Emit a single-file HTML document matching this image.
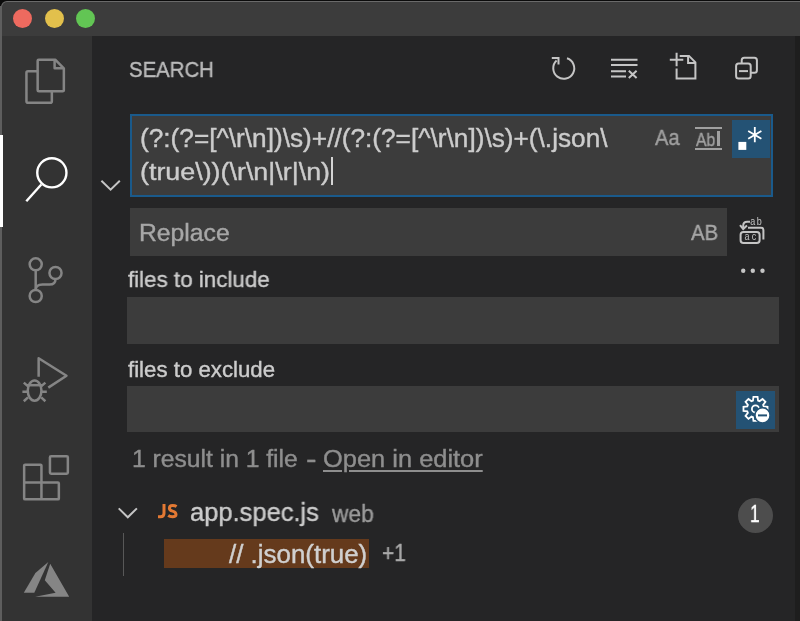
<!DOCTYPE html>
<html><head><meta charset="utf-8">
<style>
*{box-sizing:border-box;margin:0;padding:0}
html,body{width:800px;height:621px;overflow:hidden;background:#0b0b0b}
body{position:relative;font-family:"Liberation Sans",sans-serif}
.a{position:absolute}
.t{position:absolute;white-space:pre;transform-origin:0 0;will-change:transform;-webkit-text-stroke:0.4px currentColor}
.ov{position:absolute;left:0;top:0;will-change:transform}
</style></head><body>
<div class="a" style="left:1px;top:1px;width:805px;height:630px;border-radius:6px 0 0 0;background:#6a6a6a"></div>
<div class="a" style="left:0;top:6px;width:2px;height:615px;background:#5e5e5e"></div>
<div class="a" style="left:2px;top:2.4px;width:805px;height:33.6px;background:#3c3c3c;border-radius:5px 0 0 0"></div>
<div class="a" style="left:2px;top:36px;width:90px;height:600px;background:#333333"></div>
<div class="a" style="left:92px;top:36px;width:703px;height:600px;background:#252526"></div>
<div class="a" style="left:795px;top:36px;width:20px;height:600px;background:#1e1e1e"></div>
<div class="a" style="left:12.5px;top:8.5px;width:19px;height:19px;border-radius:50%;background:#ee6a5f"></div>
<div class="a" style="left:44.7px;top:8.5px;width:19px;height:19px;border-radius:50%;background:#e2c04c"></div>
<div class="a" style="left:76.3px;top:8.5px;width:19px;height:19px;border-radius:50%;background:#62c554"></div>
<div class="a" style="left:0;top:134.5px;width:3px;height:92.4px;background:#ffffff"></div>

<div class="a" style="left:130px;top:114px;width:643px;height:83px;background:#3c3c3c;border:2px solid #1a5a8b"></div>
<div class="a" style="left:731.8px;top:120.3px;width:38.2px;height:38px;background:#245274"></div>
<div class="a" style="left:331px;top:157px;width:1.6px;height:28px;background:#d4d4d4"></div>
<div class="a" style="left:130px;top:207.7px;width:597px;height:48px;background:#3c3c3c"></div>
<div class="a" style="left:127px;top:297.3px;width:652.3px;height:47.2px;background:#3c3c3c"></div>
<div class="a" style="left:127px;top:386px;width:652.3px;height:46px;background:#3c3c3c"></div>
<div class="a" style="left:736.4px;top:390.9px;width:38.2px;height:38px;background:#245274"></div>
<div class="a" style="left:123px;top:533px;width:1.3px;height:42.5px;background:#585858"></div>
<div class="a" style="left:164px;top:539px;width:205.2px;height:29px;background:#653a1c"></div>
<div class="a" style="left:738px;top:497.5px;width:35px;height:35px;border-radius:50%;background:#4d4d4d"></div>
<div class="a" style="left:694.8px;top:127px;width:26.8px;height:2px;background:#a0a0a0"></div>
<div class="a" style="left:694.8px;top:147.8px;width:26.8px;height:2px;background:#a0a0a0"></div>
<div class="a" style="left:717.4px;top:131px;width:2.2px;height:14.6px;background:#a0a0a0"></div>
<div class="t" style="left:129.31px;top:57.10px;font-size:22.00px;line-height:26.40px;color:#bbbbbb;transform:scaleX(0.9255);">SEARCH</div>
<div class="t" style="left:140.48px;top:123.35px;font-size:25.24px;line-height:30.29px;color:#cccccc;transform:scaleX(1.0390);">(?:(?=[^\r\n])\s)+//(?:(?=[^\r\n])\s)+(\.json\</div>
<div class="t" style="left:140.42px;top:157.25px;font-size:24.70px;line-height:29.64px;color:#cccccc;transform:scaleX(1.0878);">(true\))(\r\n|\r|\n)</div>
<div class="t" style="left:138.53px;top:218.31px;font-size:24.38px;line-height:29.26px;color:#a7a7a7;transform:scaleX(1.0137);">Replace</div>
<div class="t" style="left:691.20px;top:220.06px;font-size:22.16px;line-height:26.59px;color:#a7a7a7;transform:scaleX(0.9182);">AB</div>
<div class="t" style="left:654.70px;top:124.74px;font-size:21.65px;line-height:25.98px;color:#a0a0a0;transform:scaleX(0.9295);">Aa</div>
<div class="t" style="left:695.50px;top:129.55px;font-size:17.72px;line-height:21.26px;color:#a0a0a0;transform:scaleX(0.8873);">Ab</div>
<div class="t" style="left:128.30px;top:266.35px;font-size:22.68px;line-height:27.22px;color:#cccccc;transform:scaleX(0.9865);">files to include</div>
<div class="t" style="left:128.00px;top:357.10px;font-size:21.84px;line-height:26.21px;color:#cccccc;transform:scaleX(1.0186);">files to exclude</div>
<div class="t" style="left:132.27px;top:445.07px;font-size:23.71px;line-height:28.45px;color:#8e8e8e;transform:scaleX(1.0396);">1 result in 1 file</div>
<div class="t" style="left:305.51px;top:441.50px;font-size:28.16px;line-height:33.79px;color:#8e8e8e;transform:scaleX(1.1234);">-</div>
<div class="t" style="left:322.90px;top:444.23px;font-size:24.43px;line-height:29.32px;color:#8e8e8e;transform:scaleX(1.0412);"><span style="text-decoration:underline;text-underline-offset:3px">Open in editor</span></div>
<div class="t" style="left:190.44px;top:497.06px;font-size:25.64px;line-height:30.77px;color:#cccccc;transform:scaleX(0.9947);">app.spec.js</div>
<div class="t" style="left:331.60px;top:499.99px;font-size:23.58px;line-height:28.30px;color:#9a9a9a;transform:scaleX(0.9635);">web</div>
<div class="t" style="left:229.00px;top:538.77px;font-size:25.09px;line-height:30.11px;color:#d0d0d0;transform:scaleX(1.0333);">// .json(true)</div>
<div class="t" style="left:382.13px;top:540.31px;font-size:23.01px;line-height:27.61px;color:#aaaaaa;transform:scaleX(0.9053);">+1</div>
<div class="t" style="left:749.94px;top:501.23px;font-size:23.17px;line-height:27.80px;color:#ffffff;transform:scaleX(0.7384);">1</div>
<svg class="ov" width="800" height="621" viewBox="0 0 800 621">
<g fill="none" stroke="#858585" stroke-width="2.5" stroke-linejoin="round" stroke-linecap="butt">
 <path d="M37.65 60.8 Q37.65 59.65 38.8 59.65 L55.2 59.65 L63.85 68.3 L63.85 90.2 Q63.85 91.35 62.7 91.35 L38.8 91.35 Q37.65 91.35 37.65 90.2 Z"/>
 <path d="M54.6 59.65 L54.6 68.3 L63.85 68.3"/>
 <path d="M37.65 71.15 L28 71.15 Q26.45 71.15 26.45 72.7 L26.45 101.3 Q26.45 102.85 28 102.85 L50.3 102.85 Q51.85 102.85 51.85 101.3 L51.85 91.35"/>
 <circle cx="35.7" cy="264.3" r="6.05"/>
 <circle cx="35.7" cy="296" r="6.05"/>
 <circle cx="55.5" cy="273" r="6.05"/>
 <path d="M35.7 270.35 L35.7 289.95"/>
 <path d="M55.5 279.05 C55.5 283 53 284.6 49.5 284.6 L42.5 284.6 C38.5 284.6 35.7 286.5 35.7 290"/>
 <path d="M38.65 376.7 L38.65 358.2 L66.5 375.7 L48.3 387.6"/>
 <ellipse cx="34.6" cy="390.6" rx="6.85" ry="10.1"/>
 <path d="M27 385.2 L42.2 385.2"/>
 <path d="M23.8 382.6 L28.4 386.6 M45.4 382.6 L40.8 386.6 M22.4 391.7 L27.4 391.7 M41.8 391.7 L46.8 391.7 M23.8 401.2 L28 397.4 M45.4 401.2 L41.2 397.4"/>
 <path d="M24.15 465.6 Q24.15 464.65 25.1 464.65 L40.5 464.65 Q41.45 464.65 41.45 465.6 L41.45 482.55 L57.9 482.55 Q58.85 482.55 58.85 483.5 L58.85 498.4 Q58.85 499.35 57.9 499.35 L25.1 499.35 Q24.15 499.35 24.15 498.4 Z"/>
 <path d="M24.15 482.55 L41.45 482.55 L41.45 499.35"/>
 <rect x="49.95" y="456.15" width="17.9" height="17.5" rx="1.2"/>
</g>
<g fill="#858585">
 <polygon points="48.3,562.1 35.4,572.9 23.8,592.7 34.3,592.7"/>
 <polygon points="50.2,563.7 69.2,596.7 35.1,596.7 55.6,592.7 44.8,580.3"/>
</g>
<g fill="none" stroke="#ffffff" stroke-width="2.4">
 <circle cx="51.85" cy="172.8" r="14.6"/>
 <path d="M41.3 184.5 L26.3 201.3"/>
</g>
<g fill="none" stroke="#c5c5c5" stroke-width="2" stroke-linejoin="miter">
 <path d="M567 58.3 A10.5 10.5 0 1 1 556.6 60.6"/>
 <path d="M551.8 57.9 L558.5 57.9 L558.5 64.5"/>
 <path d="M611 59.7 L637.5 59.7 M611 65.1 L637.5 65.1 M611 71.2 L626 71.2 M611 76.6 L626 76.6"/>
 <path d="M628.8 70.8 L636.6 78 M636.6 70.8 L628.8 78"/>
 <path d="M669.8 59.7 L683.3 59.7 M676.6 52.8 L676.6 66.3"/>
 <path d="M676.6 68.6 L676.6 78.4 L695.4 78.4 L695.4 62.3 L689 55.9 L679.7 55.9"/>
 <path d="M688.1 55.9 L688.1 62.9 L695.4 62.9"/>
 <rect x="736.1" y="63.4" width="14.6" height="15.2" rx="2.5"/>
 <path d="M741.7 63.4 L741.7 60.3 Q741.7 57.8 744.2 57.8 L754.4 57.8 Q756.9 57.8 756.9 60.3 L756.9 70.2 Q756.9 72.7 754.4 72.7 L750.7 72.7"/>
 <path d="M739 71.1 L748 71.1"/>
 <path d="M101.4 180.7 L110.6 189.6 L119.8 180.7"/>
 <path d="M118.7 508.4 L127.8 517.3 L136.9 508.4"/>
 <rect x="740.6" y="232" width="19" height="11" rx="2.8"/>
 <path d="M748 227.7 L761 227.7 Q763.4 227.7 763.4 230.1 L763.4 239.5"/>
 <path d="M750 221.7 L747.2 221.7 Q743.2 221.7 743.2 225.7 L743.2 229"/>
 <path d="M740 225.2 L743.2 229 L747 225.5"/>
</g>
<g fill="none" stroke="#e37933" stroke-width="3" stroke-linecap="butt">
 <path d="M164 504 L164 513.2 Q164 516.7 160.5 516.7 L158 516.7"/>
 <path d="M176.6 506.4 Q175 505.4 172.6 505.4 Q169.4 505.4 169.4 508.2 Q169.4 510.3 172.6 511.1 Q176 512 176 514.5 Q176 516.8 172.4 516.8 Q169.9 516.8 168.2 515.6"/>
</g>
<g fill="#c5c5c5" font-family="Liberation Sans" font-size="10">
 <text x="750.2" y="224.7" letter-spacing="1.6" transform="translate(750.2 0) scale(0.9 1) translate(-750.2 0)">ab</text>
 <text x="744.6" y="240" letter-spacing="2.4" transform="translate(744.6 0) scale(0.9 1) translate(-744.6 0)">ac</text>
 <circle cx="743.2" cy="270.7" r="2.2"/><circle cx="752.8" cy="270.7" r="2.2"/><circle cx="762.5" cy="270.7" r="2.2"/>
</g>
<g fill="#ffffff" stroke="none">
 <rect x="738.4" y="141.9" width="7.9" height="8"/>
</g>
<g stroke="#ffffff" stroke-width="1.8" fill="none">
 <path d="M754.8 126.9 L754.8 142.3 M748.2 131 L761.4 138.7 M748.2 138.7 L761.4 131"/>
</g>
<g fill="none" stroke="#ffffff" stroke-width="1.8">
 <path d="M752.96 400.68 L753.44 396.88 L757.56 396.88 L758.04 400.68 L759.51 401.29 L762.54 398.94 L765.46 401.86 L763.11 404.89 L763.72 406.36 L767.52 406.84 L767.52 410.96 L763.72 411.44 L763.11 412.91 L765.46 415.94 L762.54 418.86 L759.51 416.51 L758.04 417.12 L757.56 420.92 L753.44 420.92 L752.96 417.12 L751.49 416.51 L748.46 418.86 L745.54 415.94 L747.89 412.91 L747.28 411.44 L743.48 410.96 L743.48 406.84 L747.28 406.36 L747.89 404.89 L745.54 401.86 L748.46 398.94 L751.49 401.29Z"/>
 <circle cx="755.5" cy="408.9" r="3.6"/>
</g>
<circle cx="762.5" cy="415.4" r="7.6" fill="#ffffff" stroke="#245274" stroke-width="1.6"/>
<path d="M758 415.4 L767 415.4" stroke="#245274" stroke-width="2"/>
</svg>
</body></html>
